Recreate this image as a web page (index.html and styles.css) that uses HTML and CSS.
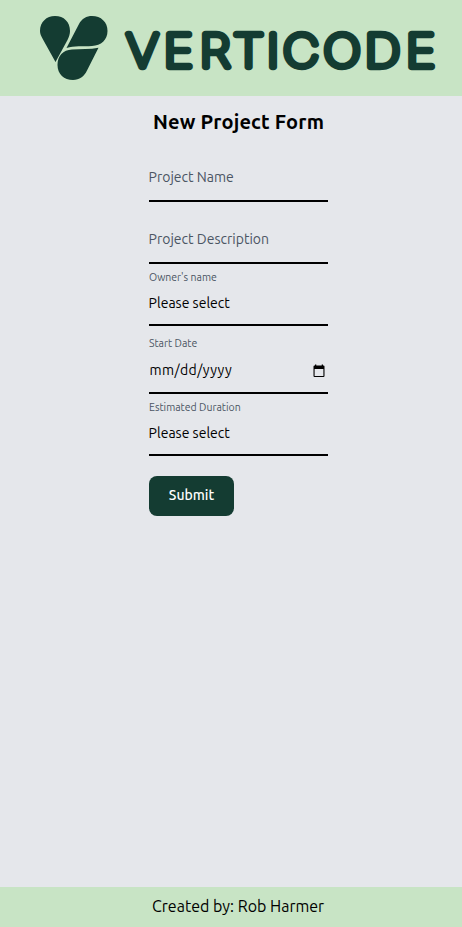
FILE: index.html
```
<!DOCTYPE html>
<html lang="en">
<head>
<meta charset="utf-8">
<title>Verticode</title>
<link rel="stylesheet" href="styles.css">
</head>
<body>
<header class="header">
  <svg class="logo" viewBox="0 0 462 96" role="img" aria-label="Verticode">
    <path d="M55.500 62L43 39.500C41 36 40 34 40 31C40 22 46.500 16 55 16C64 16 70 22 70 31C70 34 69 37 67.500 40Z"/>
    <path d="M66.500 48L79 24C82 18.500 86.500 16 92 16C101 16 107.500 22 107.500 31C107.500 40 101 45.500 92 46C83 46.500 74 45.500 66.500 48Z"/>
    <path d="M98.500 47.800L87 70.500C84 76.500 79.500 80 73 80C64 80 57.500 74 57.500 65C57.500 56 63 50 72 49.500C81 49 90 49.500 98.500 47.800Z"/>
    <text class="wordmark" transform="scale(1.12 1)" y="66.900" x="127.100 159.200 192 222 243.800 268.800 305.400 341.500 375.500">VERTICODE</text>
  </svg>
</header>
<main class="main">
  <form class="form">
    <h1 class="title">New Project Form</h1>
    <div class="field first"><span class="value muted">Project Name</span></div>
    <div class="field plain"><span class="value muted">Project Description</span></div>
    <div class="field select"><span class="label">Owner's name</span><span class="value">Please select</span></div>
    <div class="field date"><span class="label">Start Date</span>
      <span class="date-row"><span class="value date-value">mm/dd/yyyy</span>
      <svg class="calendar" viewBox="0 0 12 14"><path d="M2 .5H3.300V1.500H8.700V.5H10V1.500H10.500Q11.500 1.500 11.500 2.500V12Q11.500 13 10.500 13H1.500Q.5 13 .5 12V2.500Q.5 1.500 1.500 1.500H2ZM1.600 5V11.900H10.400V5Z"/></svg></span>
    </div>
    <div class="field select"><span class="label">Estimated Duration</span><span class="value">Please select</span></div>
    <button class="submit" type="button">Submit</button>
  </form>
</main>
<footer class="footer"><span>Created by: Rob Harmer</span></footer>
</body>
</html>
```
FILE: styles.css
```
* { box-sizing: border-box; }
body {
  margin: 0;
  height: 927px;
  display: flex;
  flex-direction: column;
  background: #e5e7eb;
  color: #000;
  font-family: Ubuntu, "Noto Sans", sans-serif;
}
.header { height: 96px; background: #c8e4c5; }
.logo { display: block; width: 462px; height: 96px; fill: #143c32; }
.wordmark {
  font-family: Inter, "Liberation Sans", sans-serif;
  font-size: 44.5px;
  font-weight: 100;
  text-anchor: middle;
  stroke: #143c32;
  stroke-width: 6.3px;
  stroke-linejoin: round;
}
.main { flex: 1; }
.form { width: 179px; margin-left: 149px; }
.title {
  margin: 0;
  height: 52px;
  padding-top: 12px;
  font-size: 20px;
  line-height: 28px;
  letter-spacing: .17px;
  text-align: center;
  white-space: nowrap;
}
.field {
  display: flex;
  flex-direction: column;
  justify-content: flex-end;
  height: 62px;
  padding-bottom: 13px;
  border-bottom: 2px solid #000;
  white-space: nowrap;
}
.first { height: 54px; }
.select { padding-bottom: 11px; }
.date { height: 68px; padding-bottom: 12px; }
.label { font-size: 10.5px; line-height: 16px; color: #4b5563; }
.value { font-size: 14px; line-height: 20px; margin-left: -.4px; }
.select .value { margin-top: 8px; }
.muted { color: #4b5563; }
.date-row { display: flex; align-items: center; justify-content: space-between; margin-top: 9px; padding-right: 3px; }
.date-value { padding-left: 1px; letter-spacing: .4px; }
.calendar { width: 12px; height: 14px; margin-top: 1px; }
.submit {
  display: block;
  width: 85px;
  height: 40px;
  margin-top: 20px;
  padding: 0 0 2px;
  border: 0;
  border-radius: 8px;
  background: #143c32;
  color: #fff;
  font: 500 14px/20px Ubuntu, "Noto Sans", sans-serif;
}
.footer {
  height: 40px;
  padding: 7px 0 0 152px;
  background: #c8e4c5;
  font-size: 16px;
  line-height: 24px;
}
```
